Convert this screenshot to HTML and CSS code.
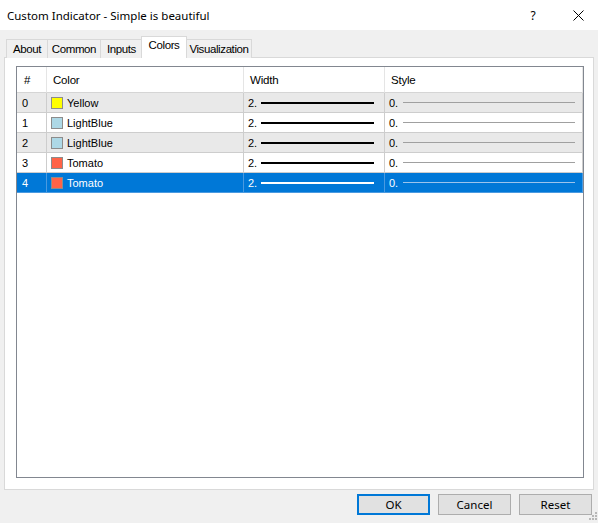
FILE: index.html
```html
<!DOCTYPE html>
<html>
<head>
<meta charset="utf-8">
<link rel="stylesheet" href="styles.css">
</head>
<body>
<div class="window">
  <div class="titlebar">
    <div class="title">Custom Indicator - Simple is beautiful</div>
    <div class="help">?</div>
    <div class="close">
      <svg width="11" height="11" viewBox="0 0 11 11"><path d="M0.5 0.5 L10.5 10.5 M10.5 0.5 L0.5 10.5" stroke="#000" stroke-width="1" fill="none"/></svg>
    </div>
  </div>
  <div class="tabs">
    <div class="tab t-about">About</div>
    <div class="tab t-common">Common</div>
    <div class="tab t-inputs">Inputs</div>
    <div class="tab t-colors active">Colors</div>
    <div class="tab t-vis">Visualization</div>
  </div>
  <div class="panel">
    <div class="list">
      <div class="row head">
        <div class="cell c-num">#</div>
        <div class="cell c-color">Color</div>
        <div class="cell c-width">Width</div>
        <div class="cell c-style">Style</div>
      </div>
      <div class="row alt">
        <div class="cell c-num">0</div>
        <div class="cell c-color"><span class="sw yellow"></span>Yellow</div>
        <div class="cell c-width">2.<span class="wline"></span></div>
        <div class="cell c-style">0.<span class="sline"></span></div>
      </div>
      <div class="row">
        <div class="cell c-num">1</div>
        <div class="cell c-color"><span class="sw lightblue"></span>LightBlue</div>
        <div class="cell c-width">2.<span class="wline"></span></div>
        <div class="cell c-style">0.<span class="sline"></span></div>
      </div>
      <div class="row alt">
        <div class="cell c-num">2</div>
        <div class="cell c-color"><span class="sw lightblue"></span>LightBlue</div>
        <div class="cell c-width">2.<span class="wline"></span></div>
        <div class="cell c-style">0.<span class="sline"></span></div>
      </div>
      <div class="row">
        <div class="cell c-num">3</div>
        <div class="cell c-color"><span class="sw tomato"></span>Tomato</div>
        <div class="cell c-width">2.<span class="wline"></span></div>
        <div class="cell c-style">0.<span class="sline"></span></div>
      </div>
      <div class="row sel">
        <div class="cell c-num">4</div>
        <div class="cell c-color"><span class="sw tomato"></span>Tomato</div>
        <div class="cell c-width">2.<span class="wline"></span></div>
        <div class="cell c-style">0.<span class="sline"></span></div>
      </div>
    </div>
  </div>
  <div class="buttons">
    <button class="btn default">OK</button>
    <button class="btn">Cancel</button>
    <button class="btn">Reset</button>
  </div>
  <svg class="grip" width="12" height="12" viewBox="0 0 12 12">
    <rect x="9" y="1" width="2" height="2" fill="#b8b8b8"/>
    <rect x="6" y="4" width="2" height="2" fill="#b8b8b8"/>
    <rect x="9" y="4" width="2" height="2" fill="#b8b8b8"/>
    <rect x="3" y="7" width="2" height="2" fill="#b8b8b8"/>
    <rect x="6" y="7" width="2" height="2" fill="#b8b8b8"/>
    <rect x="9" y="7" width="2" height="2" fill="#b8b8b8"/>
  </svg>
</div>
</body>
</html>
```

FILE: styles.css
```css
* { box-sizing: border-box; }
html, body { margin: 0; padding: 0; }
body {
  width: 598px;
  height: 523px;
  background: #f0f0f0;
  font-family: "Noto Sans", "Liberation Sans", sans-serif;
  font-size: 12px;
  color: #000;
  overflow: hidden;
}
.window {
  position: relative;
  width: 598px;
  height: 523px;
}
.titlebar {
  height: 30px;
  background: #fff;
  display: flex;
  align-items: center;
  padding-left: 7px;
}
.title {
  flex: 1;
  font-size: 11.5px;
  color: #000;
}
.help {
  width: 50px;
  text-align: center;
  font-size: 12px;
}
.close {
  width: 40px;
  display: flex;
  justify-content: center;
  align-items: center;
}
.tabs {
  display: flex;
  align-items: flex-end;
  height: 27px;
  padding-left: 6px;
  position: relative;
  z-index: 1;
}
.tab {
  height: 19px;
  border: 1px solid #d9d9d9;
  border-bottom: none;
  border-right: none;
  background: #f0f0f0;
  display: flex;
  align-items: center;
  justify-content: center;
  font-family: "Liberation Sans", sans-serif;
  font-size: 11.5px;
  letter-spacing: -0.4px;
  margin-bottom: -1px;
  line-height: 1;
  padding-top: 1px;
  white-space: nowrap;
}
.t-about { width: 41px; }
.t-common { width: 53px; }
.t-inputs { width: 42px; }
.t-colors { width: 44px; }
.t-vis { width: 66px; border-right: 1px solid #d9d9d9; }
.tab.active {
  height: 22px;
  background: #fff;
  border: 1px solid #d9d9d9;
  border-bottom: none;
  margin-left: -1px;
  width: 46px;
  padding: 0 0 4px;
  margin-bottom: -1px;
  margin-right: -1px;
}
.panel {
  margin: 0 4px;
  height: 433px;
  background: #fff;
  border: 1px solid #d9d9d9;
  padding: 8px 9px 11px 11px;
}
.list {
  height: 412px;
  border: 1px solid #828790;
  background: #fff;
  font-family: "Liberation Sans", sans-serif;
  font-size: 11px;
}
.row {
  display: grid;
  grid-template-columns: 30px 197px 141px 198px;
  height: 20px;
  background: #fff;
}
.row.alt { background: #e9e9e9; }
.cell {
  border-right: 1px solid #cdcdcd;
  border-bottom: 1px solid #cdcdcd;
  display: flex;
  align-items: center;
  padding-left: 4px;
  white-space: nowrap;
}
.row.head { height: 26px; }
.head .cell {
  border-right-color: #e5e5e5;
  border-bottom-color: #d5d5d5;
  padding-left: 6px;
  font-family: "Liberation Sans", sans-serif;
  font-size: 11.5px;
  letter-spacing: -0.2px;
}
.head .c-num { padding-left: 7px; }
.c-num { padding-left: 5px; }
.c-color { padding-left: 4px; }
.sw {
  width: 12px;
  height: 12px;
  border: 1px solid #8c8c8c;
  margin-right: 4px;
  flex: none;
}
.sw.yellow { background: #ffff00; }
.sw.lightblue { background: #add8e6; }
.sw.tomato { background: #ff6347; }
.wline {
  display: block;
  width: 113px;
  height: 2px;
  background: #000;
  margin-left: 4px;
}
.sline {
  display: block;
  width: 172px;
  height: 1px;
  background: #a0a0a0;
  margin-left: 5px;
}
.row.sel { background: #0078d7; color: #fff; }
.row.sel .cell { border-color: #4a9ae0; }
.row.sel .wline { background: #fff; }
.row.sel .sline { background: #9cc4ec; }
.buttons {
  display: flex;
  justify-content: flex-end;
  gap: 8px;
  padding: 4px 6px 0 0;
}
.btn {
  width: 73px;
  height: 21px;
  background: #e1e1e1;
  border: 1px solid #adadad;
  font-family: "Noto Sans", sans-serif;
  font-size: 11.5px;
  color: #000;
  padding: 0;
  line-height: 1;
}
.btn.default {
  border: 2px solid #0078d7;
}
.grip {
  position: absolute;
  right: 0;
  bottom: 0;
}
```
